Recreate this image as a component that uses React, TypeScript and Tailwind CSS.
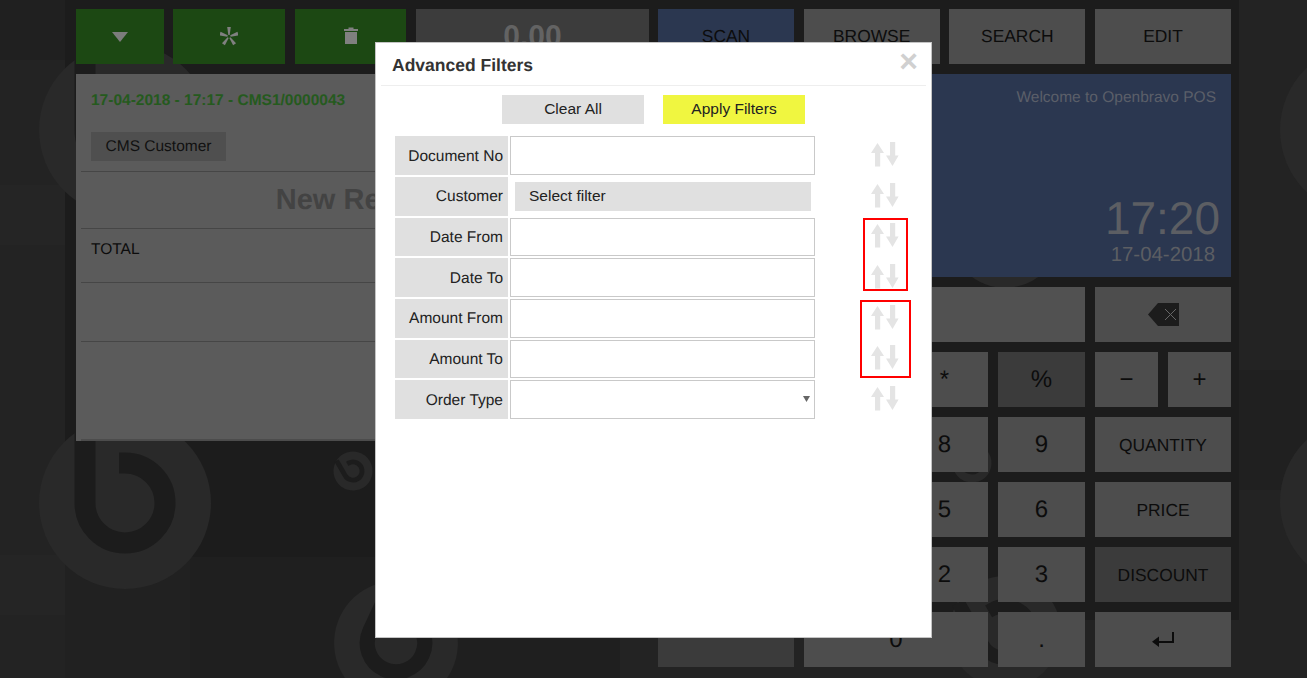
const FILTERS = ['Document No', 'Customer', 'Date From', 'Date To', 'Amount From', 'Amount To', 'Order Type'];

const key = "flex items-center justify-center bg-[#4d4d4d] text-[#0c0c0c]";
const keyTop = `${key} text-[17.4px]`;
const keyWord = `${key} pt-[1px] text-[17.4px]`;
const keyNum = `${key} text-[24px]`;
const keyDark = "flex items-center justify-center bg-[#3b3b3b] text-[#0c0c0c]";

function Logo({ x, y, s, rotate = 0 }: { x: number; y: number; s: number; rotate?: number }) {
  return (
    <g transform={`translate(${x} ${y}) rotate(${rotate}) scale(${s})`}>
      <circle r="86" fill="#292929" />
      <path d="M-6 -40 H0 A40 40 0 1 1 -40 0 V-75" fill="none" stroke="#1c1c1c" strokeWidth="21" />
    </g>
  );
}

function Backdrop() {
  return (
    <svg className="absolute inset-0" width="1307" height="678" viewBox="0 0 1307 678">
      <rect width="1307" height="678" fill="#1c1c1c" />
      <rect width="65" height="678" fill="#232323" />
      <rect x="1239" width="68" height="678" fill="#232323" />
      <rect x="65" y="557" width="125" height="121" fill="#212121" />
      <rect x="190" y="557" width="430" height="121" fill="#1f1f1f" />
      <rect x="620" y="620" width="619" height="58" fill="#232323" />
      <rect x="0" y="0" width="65" height="60" fill="#202020" />
      <rect x="0" y="185" width="65" height="60" fill="#252525" />
      <rect x="0" y="555" width="65" height="60" fill="#252525" />
      <rect x="1239" y="370" width="68" height="120" fill="#202020" />
      <Logo x={125} y={130} s={1} />
      <Logo x={125} y={503} s={1} />
      <Logo x={1366} y={130} s={1} />
      <Logo x={1366} y={502} s={1} />
      <Logo x={353} y={471} s={0.227} rotate={-30} />
      <Logo x={396} y={643} s={0.72} rotate={25} />
      <Logo x={1005} y={632} s={0.65} rotate={-30} />
      <Logo x={1005} y={232} s={0.65} rotate={-30} />
      <Logo x={972} y={463} s={0.227} rotate={-30} />
    </svg>
  );
}

function SortArrows() {
  return (
    <svg className="ml-[56px] mt-[5.8px] shrink-0" width="28" height="25" viewBox="0 0 28 25" fill="#e4e4e4">
      <polygon points="6.5,1 13,11 9.2,11 9.2,24.5 4,24.5 4,11 0,11" />
      <polygon points="19,0 24.2,0 24.2,13.5 27.6,13.5 21.5,24 15,13.5 19,13.5" />
    </svg>
  );
}

function FilterRow({ label }: { label: string }) {
  return (
    <div className="flex h-[38.7px] items-start">
      <div className="flex h-full w-[113px] items-center justify-end bg-[#e0e0e0] pr-[5px] pt-[1.5px] text-[#222]">{label}</div>
      <div className="ml-[2px] h-full w-[305px]">
        {label === 'Customer' ? (
          <div className="pl-[5px] pr-[4px] pt-[5px]">
            <button className="h-[29px] w-full bg-[#e0e0e0] pb-[1px] pl-[14px] text-left text-[#222]">Select filter</button>
          </div>
        ) : label === 'Order Type' ? (
          <div className="flex h-full items-center justify-end border border-[#c9c9c9] pr-[4px]">
            <svg className="mb-[2px]" width="7" height="7" viewBox="0 0 7 7" fill="#666"><polygon points="0,1 7,1 3.5,7" /></svg>
          </div>
        ) : (
          <input type="text" className="h-full w-full border border-[#c9c9c9] bg-white outline-none" />
        )}
      </div>
      <SortArrows />
    </div>
  );
}

function FiltersModal() {
  return (
    <div className="absolute left-[375px] top-[42px] h-[596px] w-[557px] border border-[#c4c4c4] bg-white px-[5px] text-[15.5px]">
      <div className="flex h-[43px] items-center justify-between border-b border-[#eeeeee] pl-[11px] pr-[8px]">
        <h3 className="mt-[3px] pb-[1px] text-[17.5px] leading-[24px] font-bold text-[#333]">Advanced Filters</h3>
        <span className="mb-[6px] text-[32px] leading-none font-bold text-[#d0d0d0]">×</span>
      </div>
      <div className="mt-[9px] flex justify-center gap-[19px]">
        <button className="h-[29px] w-[142px] bg-[#e0e0e0] pb-[1px] text-[#222]">Clear All</button>
        <button className="h-[29px] w-[142px] bg-[#f0f640] pb-[1px] text-[#222]">Apply Filters</button>
      </div>
      <div className="mt-[12.2px] flex flex-col gap-[2px] pl-[14px]">
        {FILTERS.map(f => <FilterRow key={f} label={f} />)}
      </div>
      {/* marked rows */}
      <div className="absolute left-[487px] top-[175px] h-[73px] w-[45px] border-2 border-[#f00]" />
      <div className="absolute left-[484px] top-[257px] h-[78px] w-[51px] border-2 border-[#f00]" />
    </div>
  );
}

function LeftColumn() {
  return (
    <div className="w-[573px]">
      <div className="flex h-[55px] justify-between">
        <div className="flex w-[88px] items-center justify-center bg-[#1c4813]">
          <svg width="16" height="10" viewBox="0 0 16 10" fill="#7c7c7c"><polygon points="0,0 16,0 8,10" /></svg>
        </div>
        <div className="ml-[9px] flex w-[112px] items-center justify-center bg-[#1c4813]">
          <svg width="18" height="19" viewBox="0 0 18 19" fill="#808080">
            {[0, 72, 144, 216, 288].map(a => (
              <polygon key={a} points="7.2,0 10.8,0 9.7,8 8.3,8" transform={`rotate(${a} 9 9.5)`} />
            ))}
          </svg>
        </div>
        <div className="ml-[10px] flex w-[111px] items-center justify-center bg-[#1c4813]">
          <svg className="mb-[2px]" width="14" height="17" viewBox="0 0 14 17" fill="#808080">
            <path d="M0 2 H4.5 V0.5 H9.5 V2 H14 V4 H0 Z" />
            <path d="M1 5 H13 V17 H1 Z" />
          </svg>
        </div>
        <div className="ml-[10px] flex flex-1 items-center justify-center bg-[#3c3c3c] text-[30px] font-bold text-[#636363]">0.00</div>
      </div>

      <div className="mt-[10px] h-[367px] bg-[#5b5b5b] pl-[5px]">
        <div className="flex h-[50px] items-center pl-[10px] pt-[3px] text-[15.5px] font-bold text-[#255a1e]">17-04-2018 - 17:17 - CMS1/0000043</div>
        <div className="h-[48px] border-b border-[#464646] pl-[10px] pt-[8px]">
          <div className="flex h-[29px] w-[135px] items-center justify-center bg-[#4f4f4f] pt-[1px] text-[15.5px] text-[#111]">CMS Customer</div>
        </div>
        <div className="flex h-[57px] items-center justify-center border-b border-[#464646] pr-[6px] pt-[2px] text-[29px] font-bold text-[#434343]">New Receipt</div>
        <div className="h-[54px] border-b border-[#464646] pl-[10px] pt-[9px] text-[15.5px] text-[#0c0c0c]">TOTAL</div>
        <div className="h-[59px] border-b border-[#464646]" />
        <div className="h-[99px] border-b-2 border-[#4c4c4c]" />
      </div>
    </div>
  );
}

function RightColumn() {
  return (
    <div className="w-[573px]">
      <div className="flex h-[55px] justify-between">
        <div className={`w-[136px] ${keyTop} !bg-[#2b3750]`}>SCAN</div>
        <div className={`w-[136px] ${keyTop}`}>BROWSE</div>
        <div className={`w-[136px] ${keyTop}`}>SEARCH</div>
        <div className={`w-[136px] ${keyTop}`}>EDIT</div>
      </div>

      <div className="mt-[10px] flex h-[203px] flex-col items-end bg-[#2b3750] pr-[11px] text-[#5b5f69]">
        <div className="mr-[4px] mt-[12px] text-[15.5px]">Welcome to Openbravo POS</div>
        <div className="mb-[-1px] mt-[auto] text-[46px] leading-[52px] text-[#5c5e63]">17:20</div>
        <div className="mb-[10px] mr-[5px] text-[20.4px] leading-[24px] text-[#5c5e63]">17-04-2018</div>
      </div>

      <div className="mt-[10px] grid grid-cols-[136px_87px_87px_87px_136px] grid-rows-[repeat(6,55px)] gap-[10px]">
        <div className="col-span-4 bg-[#515151]" />
        <div className={key}>
          <svg width="31" height="23" viewBox="0 0 31 23">
            <polygon points="0,11.5 10,0 31,0 31,23 10,23" fill="#1c1c1c" />
            <path d="M17 6 L28 17 M28 6 L17 17" stroke="#666" strokeWidth="1" />
          </svg>
        </div>

        <div className={keyDark} />
        <div className={keyNum}>/</div>
        <div className={keyNum}>*</div>
        <div className={`${keyDark} text-[24px]`}>%</div>
        <div className="flex gap-[10px]">
          <div className={`flex-1 ${keyNum}`}>−</div>
          <div className={`flex-1 ${keyNum}`}>+</div>
        </div>

        <div className={keyDark} />
        <div className={keyNum}>7</div>
        <div className={keyNum}>8</div>
        <div className={keyNum}>9</div>
        <div className={keyWord}>QUANTITY</div>

        <div className={keyDark} />
        <div className={keyNum}>4</div>
        <div className={keyNum}>5</div>
        <div className={keyNum}>6</div>
        <div className={keyWord}>PRICE</div>

        <div className={keyDark} />
        <div className={keyNum}>1</div>
        <div className={keyNum}>2</div>
        <div className={keyNum}>3</div>
        <div className={`${keyDark} pt-[1px] text-[17.4px]`}>DISCOUNT</div>

        <div className={keyDark} />
        <div className={`col-span-2 ${keyNum}`}>0</div>
        <div className={keyNum}>.</div>
        <div className={key}>
          <svg width="22" height="15" viewBox="0 0 22 15" fill="#0c0c0c">
            <path d="M20 0 H22 V11 H6 V9 H20 Z" />
            <path d="M0 9.8 L7 4.5 V15 Z" />
          </svg>
        </div>
      </div>
    </div>
  );
}

export default function App() {
  return (
    <div className="relative h-[678px] w-[1307px] overflow-hidden font-['Liberation_Sans',Arial,sans-serif] [text-rendering:geometricPrecision]">
      <Backdrop />
      <div className="relative ml-[76px] flex w-[1155px] justify-between pt-[9px]">
        <LeftColumn />
        <RightColumn />
      </div>
      <FiltersModal />
    </div>
  );
}
